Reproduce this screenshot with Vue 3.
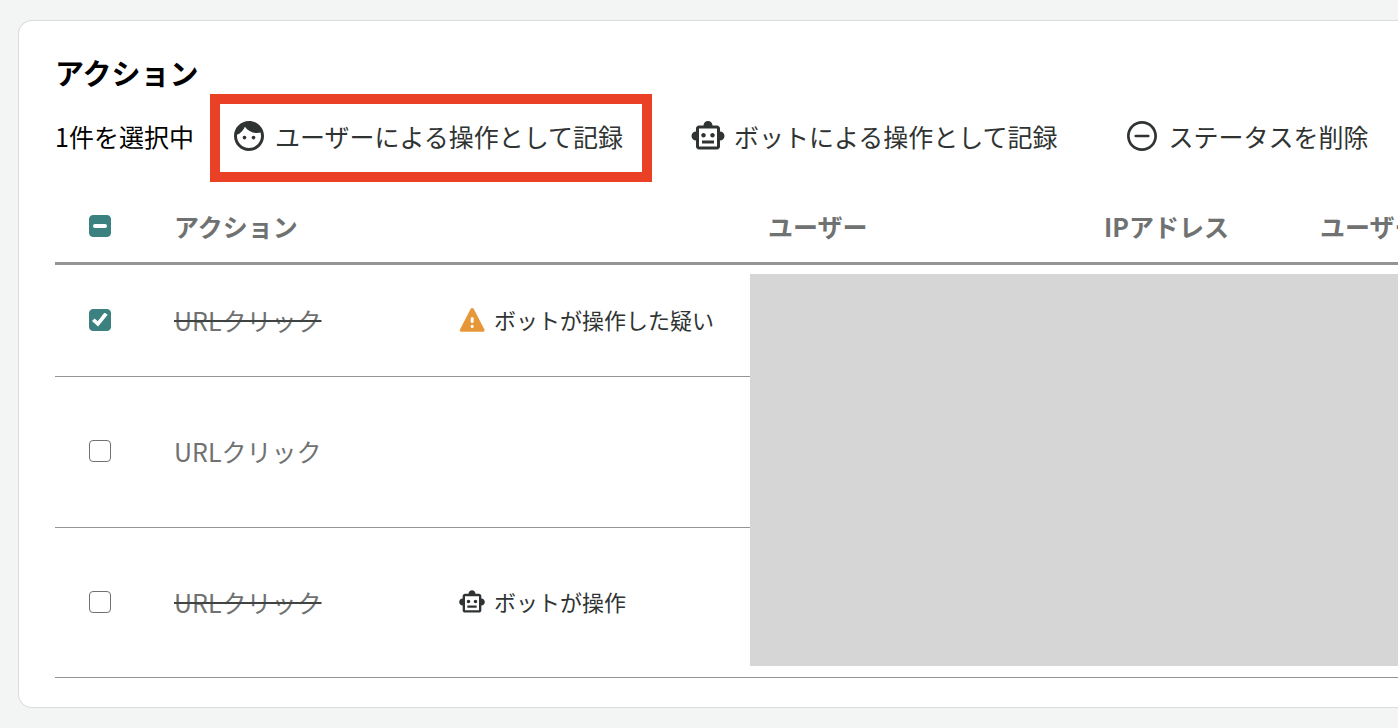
<script setup>
import { ref, computed } from 'vue'

const rows = ref([
  { id: 1, action: 'URLクリック', struck: true, status: 'suspect', label: 'ボットが操作した疑い', checked: true },
  { id: 2, action: 'URLクリック', struck: false, status: null, label: '', checked: false },
  { id: 3, action: 'URLクリック', struck: true, status: 'bot', label: 'ボットが操作', checked: false }
])

const selectedCount = computed(() => rows.value.filter(r => r.checked).length)
const allSelected = computed(() => selectedCount.value === rows.value.length)
const someSelected = computed(() => selectedCount.value > 0 && !allSelected.value)

const toggleAll = (e) => {
  rows.value.forEach(r => { r.checked = e.target.checked })
}

const markAs = (status, label) => {
  rows.value.filter(r => r.checked).forEach(r => {
    r.status = status
    r.label = label
    r.struck = status === 'bot'
  })
}
</script>

<template>
  <main class="page">
    <section class="card">
      <h2 class="title">アクション</h2>

      <div class="toolbar">
        <span class="count">{{ selectedCount }}件を選択中</span>
        <div class="actions">
          <button type="button" class="action highlighted" @click="markAs(null, '')">
            <svg class="icon" viewBox="0 0 24 24" aria-hidden="true">
              <path d="M9 11.75c-.69 0-1.25.56-1.25 1.25s.56 1.25 1.25 1.25 1.25-.56 1.25-1.25-.56-1.25-1.25-1.25zm6 0c-.69 0-1.25.56-1.25 1.25s.56 1.25 1.25 1.25 1.25-.56 1.25-1.25-.56-1.25-1.25-1.25zM12 2C6.48 2 2 6.48 2 12s4.48 10 10 10 10-4.48 10-10S17.52 2 12 2zm0 18c-4.41 0-8-3.59-8-8 0-.29.02-.58.05-.86 2.36-1.05 4.23-2.98 5.21-5.37C11.07 8.33 14.05 10 17.42 10c.78 0 1.53-.09 2.25-.26.21.71.33 1.47.33 2.26 0 4.41-3.59 8-8 8z" />
            </svg>
            <span>ユーザーによる操作として記録</span>
          </button>
          <button type="button" class="action" @click="markAs('bot', 'ボットが操作')">
            <svg class="icon" viewBox="0 0 24 24" aria-hidden="true">
              <path d="M20 9V7c0-1.1-.9-2-2-2h-3c0-1.66-1.34-3-3-3S9 3.34 9 5H6c-1.1 0-2 .9-2 2v2c-1.66 0-3 1.34-3 3s1.34 3 3 3v4c0 1.1.9 2 2 2h12c1.1 0 2-.9 2-2v-4c1.66 0 3-1.34 3-3s-1.34-3-3-3zm-2 10H6V7h12v12zm-9-6c-.83 0-1.5-.67-1.5-1.5S8.17 10 9 10s1.5.67 1.5 1.5S9.83 13 9 13zm7.5-1.5c0 .83-.67 1.5-1.5 1.5s-1.5-.67-1.5-1.5.67-1.5 1.5-1.5 1.5.67 1.5 1.5zM8 15h8v2H8v-2z" />
            </svg>
            <span>ボットによる操作として記録</span>
          </button>
          <button type="button" class="action" @click="markAs(null, '')">
            <svg class="icon" viewBox="0 0 24 24" aria-hidden="true">
              <path d="M7.8 11.2h8.4a.85.85 0 0 1 0 1.7H7.8a.85.85 0 0 1 0-1.7zM12 2C6.48 2 2 6.48 2 12s4.48 10 10 10 10-4.48 10-10S17.52 2 12 2zm0 18.2c-4.53 0-8.2-3.67-8.2-8.2s3.67-8.2 8.2-8.2 8.2 3.67 8.2 8.2-3.67 8.2-8.2 8.2z" />
            </svg>
            <span>ステータスを削除</span>
          </button>
        </div>
      </div>

      <table class="table">
        <colgroup>
          <col class="col-check" />
          <col class="col-action" />
          <col class="col-status" />
          <col class="col-user" />
          <col class="col-ip" />
          <col />
        </colgroup>
        <thead>
          <tr>
            <th class="check">
              <input
                type="checkbox"
                aria-label="すべて選択"
                :checked="allSelected"
                :indeterminate="someSelected"
                @change="toggleAll"
              />
            </th>
            <th colspan="2">アクション</th>
            <th class="inset">ユーザー</th>
            <th class="inset">IPアドレス</th>
            <th class="inset">ユーザー</th>
          </tr>
        </thead>
        <tbody>
          <tr v-for="(row, index) in rows" :key="row.id">
            <td class="check">
              <input type="checkbox" v-model="row.checked" :aria-label="row.action" />
            </td>
            <td class="name">
              <span :class="{ struck: row.struck }">{{ row.action }}</span>
            </td>
            <td>
              <div v-if="row.status" class="status">
                <svg v-if="row.status === 'suspect'" class="icon-small" viewBox="0 0 28 28" aria-hidden="true">
                  <path class="warn" d="M12.6 3c.8-1.4 2.4-1.4 3.2 0l10.5 20.2c.7 1.4-.1 2.6-1.6 2.6H3.7c-1.5 0-2.3-1.2-1.6-2.6z" />
                  <path class="mark" d="M14.2 12.4v3.2M14.2 20.2v.4" />
                </svg>
                <svg v-else class="icon-small" viewBox="0 0 24 24" aria-hidden="true">
                  <path d="M20 9V7c0-1.1-.9-2-2-2h-3c0-1.66-1.34-3-3-3S9 3.34 9 5H6c-1.1 0-2 .9-2 2v2c-1.66 0-3 1.34-3 3s1.34 3 3 3v4c0 1.1.9 2 2 2h12c1.1 0 2-.9 2-2v-4c1.66 0 3-1.34 3-3s-1.34-3-3-3zm-2 10H6V7h12v12zm-9-6c-.83 0-1.5-.67-1.5-1.5S8.17 10 9 10s1.5.67 1.5 1.5S9.83 13 9 13zm7.5-1.5c0 .83-.67 1.5-1.5 1.5s-1.5-.67-1.5-1.5.67-1.5 1.5-1.5 1.5.67 1.5 1.5zM8 15h8v2H8v-2z" />
                </svg>
                <span class="status-label">{{ row.label }}</span>
              </div>
            </td>
            <!-- user details are masked for all rows at once -->
            <td v-if="index === 0" class="masked" colspan="3" :rowspan="rows.length">
              <div class="mask"></div>
            </td>
          </tr>
        </tbody>
      </table>
    </section>
  </main>
</template>

<style>
body {
  margin: 0;
  background: #f3f5f4;
}
</style>

<style scoped>
.page {
  padding: 20px 0 20px 18px;
  overflow: hidden;
  font-family: "Noto Sans CJK JP", sans-serif;
  font-size: 25px;
  line-height: 40px;
  color: #000;
}

.card {
  padding: 31px 0 29px 36px;
  background: #fff;
  border: 1px solid #d9dcdb;
  border-right: none;
  border-radius: 14px 0 0 14px;
}

.title {
  margin: 0 0 2px;
  font-size: 29px;
  line-height: 40px;
  font-weight: 700;
}

.toolbar {
  display: flex;
  align-items: center;
  gap: 16px;
  white-space: nowrap;
}

.count {
  padding-bottom: 4px;
}

.actions {
  display: flex;
  gap: 17px;
}

.action {
  display: flex;
  align-items: center;
  gap: 8px;
  padding: 12px 19px 16px 11px;
  border: 10px solid transparent;
  background: none;
  color: #2f3433;
  font: inherit;
  white-space: nowrap;
  cursor: pointer;
}

.action.highlighted {
  border-color: #ea4025;
}

.icon {
  width: 36px;
  height: 36px;
  fill: #2f3433;
}

.table {
  width: 100%;
  margin-top: 12px;
  table-layout: fixed;
  border-collapse: separate;
  border-spacing: 0;
}

.col-check {
  width: 119px;
}

.col-action {
  width: 284px;
}

.col-status {
  width: 292px;
}

.col-user {
  width: 336px;
}

.col-ip {
  width: 216px;
}

th {
  height: 64px;
  padding: 0 0 4px;
  border-bottom: 3px solid #949494;
  color: #6f7271;
  font-weight: 700;
  text-align: left;
  white-space: nowrap;
}

th.inset {
  padding-left: 18px;
}

td {
  height: 147px;
  padding: 0 0 2px;
  border-bottom: 1px solid #949494;
}

tr:first-child td {
  height: 109px;
}

tr:nth-child(2) td {
  height: 148px;
}

.check {
  padding-left: 34px;
}

.name {
  color: #6f7271;
}

.struck {
  text-decoration: line-through;
  text-decoration-color: #3f4342;
  text-decoration-thickness: 2px;
}

.status {
  display: flex;
  align-items: center;
  gap: 8px;
  color: #2f3433;
  font-size: 22px;
  white-space: nowrap;
}

.status-label {
  padding-bottom: 2px;
}

.icon-small {
  width: 28px;
  height: 28px;
  fill: #2f3433;
}

.warn {
  fill: #e69737;
}

.mark {
  fill: none;
  stroke: #fff;
  stroke-width: 3;
  stroke-linecap: round;
}

tr:first-child .masked {
  height: auto;
  padding: 9px 0 11px;
}

.mask {
  height: 392px;
  background: #d6d6d6;
}

input[type="checkbox"] {
  appearance: none;
  display: grid;
  place-items: center;
  box-sizing: border-box;
  width: 22px;
  height: 22px;
  margin: 0;
  border: 1px solid #6f7271;
  border-radius: 4px;
  background: #fff;
}

input[type="checkbox"]:checked,
input[type="checkbox"]:indeterminate {
  border-color: #3a8180;
  background: #3a8180;
}

input[type="checkbox"]:checked::after {
  content: "";
  width: 16px;
  height: 14px;
  background: #fff;
  clip-path: polygon(0 60%, 16% 42%, 36% 62%, 78% 0, 98% 16%, 38% 100%);
}

input[type="checkbox"]:indeterminate::after {
  content: "";
  width: 14px;
  height: 4px;
  border-radius: 2px;
  background: #fff;
}
</style>
